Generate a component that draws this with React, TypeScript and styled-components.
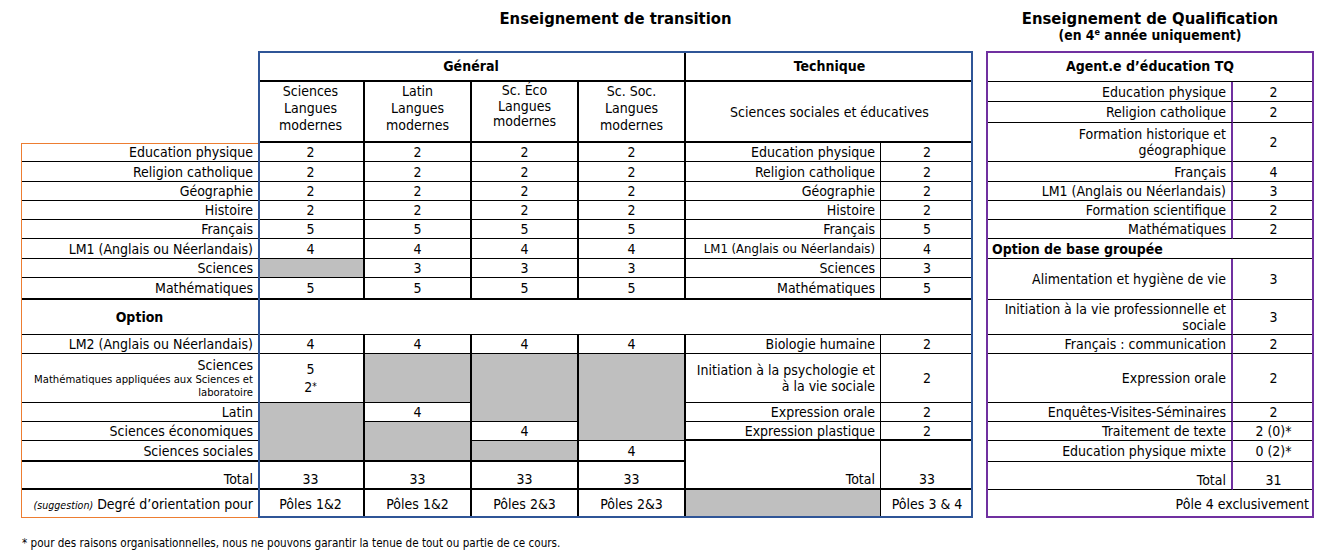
import React from 'react';
import styled, { createGlobalStyle } from 'styled-components';

const BLUE = '#2F5597';
const PURPLE = '#7030A0';
const ORANGE = '#ED7D31';
const GRAY = '#BFBFBF';

const GlobalStyle = createGlobalStyle`
  html, body { margin: 0; padding: 0; background: #fff; }
  body {
    font-family: "DejaVu Sans Condensed", "DejaVu Sans", sans-serif;
    font-stretch: condensed;
    color: #000;
  }
`;

const Page = styled.div`
  padding-left: 21px;
`;

const Sheet = styled.div`
  display: grid;
  grid-template-columns: 237px 107px 107px 107px 107px 195px 92px 13px 247px 81px;
  grid-template-rows: 51px 31px 20px 21px 20px 19px 20px 19px 19px 19px 20px 19px 22px 35px 19px 49px 19px 19px 21px 28px 28px;
  font-size: 14px;
  line-height: 16px;
`;

interface CellProps {
  $area: string;
  $r?: number;
  $rc?: string;
  $b?: number;
  $end?: boolean;
  $size?: number;
}

const Cell = styled.div<CellProps>`
  grid-area: ${p => p.$area};
  box-sizing: border-box;
  min-width: 0;
  display: flex;
  flex-direction: column;
  justify-content: ${p => (p.$end ? 'flex-end' : 'center')};
  padding-bottom: ${p => (p.$end ? '1px' : '0')};
  border-right: ${p => (p.$r ? `${p.$r}px solid ${p.$rc ?? '#000'}` : '0')};
  border-bottom: ${p => (p.$b ? `${p.$b}px solid #000` : '0')};
  font-size: ${p => p.$size ?? 14}px;
  white-space: pre;
`;

const Label = styled(Cell)`
  align-items: flex-end;
  text-align: right;
  padding-left: 4px;
  padding-right: 5px;
`;

const Num = styled(Cell)`
  align-items: center;
  text-align: center;
`;

const Head = styled(Cell)<{ $left?: boolean }>`
  align-items: ${p => (p.$left ? 'flex-start' : 'center')};
  padding-left: ${p => (p.$left ? '6px' : '0')};
  font-weight: 700;
`;

const SubHead = styled(Cell)<{ $lh?: number; $lift?: number }>`
  align-items: center;
  text-align: center;
  line-height: ${p => p.$lh ?? 17}px;
  padding-bottom: ${p => p.$lift ?? 6}px;
`;

const Shade = styled(Cell)`
  background: ${GRAY};
`;

const Frame = styled.div<{ $area: string; $color: string; $w: number; $open?: boolean }>`
  grid-area: ${p => p.$area};
  border: ${p => p.$w}px solid ${p => p.$color};
  border-right-width: ${p => (p.$open ? 0 : p.$w)}px;
  pointer-events: none;
  z-index: 1;
`;

const Title = styled.div<{ $area: string }>`
  grid-area: ${p => p.$area};
  display: flex;
  flex-direction: column;
  align-items: center;
  padding-top: 9px;
  font-weight: 700;
  font-size: 16.5px;
  line-height: 19px;
`;

const SubTitle = styled.span`
  font-size: 13.8px;
  line-height: 14px;
`;

const Sup = styled.sup`
  font-size: 9px;
  line-height: 0;
  vertical-align: 5px;
`;

const Small = styled.span`
  font-size: 11.2px;
  line-height: 13px;
`;

const Note = styled.span`
  font-size: 10.6px;
  font-style: italic;
`;

const Star = styled.span`
  font-size: 10px;
  vertical-align: 2px;
`;

const Stack = styled.span`
  line-height: 18px;
`;

const Footnote = styled.p`
  margin: 18px 0 0 1px;
  font-size: 11.6px;
  line-height: 14px;
`;

const core: [string, (string | null)[], string, number?][] = [
  ['Education physique', ['2', '2', '2', '2'], '2'],
  ['Religion catholique', ['2', '2', '2', '2'], '2'],
  ['Géographie', ['2', '2', '2', '2'], '2'],
  ['Histoire', ['2', '2', '2', '2'], '2'],
  ['Français', ['5', '5', '5', '5'], '5'],
  ['LM1 (Anglais ou Néerlandais)', ['4', '4', '4', '4'], '4', 13],
  ['Sciences', [null, '3', '3', '3'], '3'],
  ['Mathématiques', ['5', '5', '5', '5'], '5'],
];

const qualif: [number, number, string, string][] = [
  [3, 4, 'Education physique', '2'],
  [4, 5, 'Religion catholique', '2'],
  [5, 7, 'Formation historique et\ngéographique', '2'],
  [7, 8, 'Français', '4'],
  [8, 9, 'LM1 (Anglais ou Néerlandais)', '3'],
  [9, 10, 'Formation scientifique', '2'],
  [10, 11, 'Mathématiques', '2'],
  [12, 14, 'Alimentation et hygiène de vie', '3'],
  [14, 15, 'Initiation à la vie professionnelle et\nsociale', '3'],
  [15, 16, 'Français : communication', '2'],
  [16, 17, 'Expression orale', '2'],
  [17, 18, 'Enquêtes-Visites-Séminaires', '2'],
  [18, 19, 'Traitement de texte', '2 (0)*'],
  [19, 20, 'Education physique mixte', '0 (2)*'],
];

// option block: [col, rowStart, rowEnd, content|null]
const optionBlock: [number, number, number, React.ReactNode | null][] = [
  [2, 17, 20, null],
  [3, 16, 17, null],
  [3, 17, 18, '4'],
  [3, 18, 20, null],
  [4, 16, 18, null],
  [4, 18, 19, '4'],
  [4, 19, 20, null],
  [5, 16, 19, null],
  [5, 19, 20, '4'],
];

const techOption: [number, number, string, string, number][] = [
  [15, 16, 'Biologie humaine', '2', 1],
  [16, 17, 'Initiation à la psychologie et\nà la vie sociale', '2', 1],
  [17, 18, 'Expression orale', '2', 1],
  [18, 19, 'Expression plastique', '2', 2],
];

const sub = [
  { text: 'Sciences\nLangues\nmodernes' },
  { text: 'Latin\nLangues\nmodernes' },
  { text: 'Sc. Éco\nLangues\nmodernes', lh: 15.5, lift: 10 },
  { text: 'Sc. Soc.\nLangues\nmodernes' },
];

const poles = ['Pôles 1&2', 'Pôles 1&2', 'Pôles 2&3', 'Pôles 2&3'];

export default function App() {
  return (
    <Page>
      <GlobalStyle />
      <Sheet>
        <Title $area="1 / 2 / 2 / 8">Enseignement de transition</Title>
        <Title $area="1 / 9 / 2 / 11">
          Enseignement de Qualification
          <SubTitle>
            (en 4<Sup>e</Sup> année uniquement)
          </SubTitle>
        </Title>

        {/* headers */}
        <Head $area="2 / 2 / 3 / 6" $r={2} $b={2}>Général</Head>
        <Head $area="2 / 6 / 3 / 8" $b={2}>Technique</Head>
        {sub.map((s, j) => (
          <SubHead key={j} $area={`3 / ${2 + j} / 6 / ${3 + j}`} $r={2} $b={2} $lh={s.lh} $lift={s.lift}>
            {s.text}
          </SubHead>
        ))}
        <Num $area="3 / 6 / 6 / 8" $b={2}>Sciences sociales et éducatives</Num>

        {/* common subjects */}
        {core.map(([label, vals, tech, techSize], i) => {
          const line = 6 + i;
          const b = i === core.length - 1 ? 2 : 1;
          return (
            <React.Fragment key={label}>
              <Label $area={`${line} / 1 / ${line + 1} / 2`} $b={b}>{label}</Label>
              {vals.map((v, j) =>
                v === null ? (
                  <Shade key={j} $area={`${line} / ${2 + j} / ${line + 1} / ${3 + j}`} $r={2} $b={b} />
                ) : (
                  <Num key={j} $area={`${line} / ${2 + j} / ${line + 1} / ${3 + j}`} $r={2} $b={b}>{v}</Num>
                )
              )}
              <Label $area={`${line} / 6 / ${line + 1} / 7`} $r={1} $b={b} $size={techSize}>{label}</Label>
              <Num $area={`${line} / 7 / ${line + 1} / 8`} $b={b}>{tech}</Num>
            </React.Fragment>
          );
        })}

        {/* option section */}
        <Head $area="14 / 1 / 15 / 2" $b={1}>Option</Head>
        <Cell $area="14 / 2 / 15 / 8" $b={1} />

        <Label $area="15 / 1 / 16 / 2" $b={1}>LM2 (Anglais ou Néerlandais)</Label>
        {[0, 1, 2, 3].map(j => (
          <Num key={j} $area={`15 / ${2 + j} / 16 / ${3 + j}`} $r={2} $b={1}>4</Num>
        ))}

        <Label $area="16 / 1 / 17 / 2" $b={1}>
          Sciences
          <Small>{'Mathématiques appliquées aux Sciences et\nlaboratoire'}</Small>
        </Label>
        <Num $area="16 / 2 / 17 / 3" $r={2} $b={1}>
          <Stack>5</Stack>
          <Stack>
            2<Star>*</Star>
          </Stack>
        </Num>
        {optionBlock.map(([col, rs, re, content], k) => {
          const area = `${rs} / ${col} / ${re} / ${col + 1}`;
          const b = re === 20 ? 2 : 1;
          return content === null ? (
            <Shade key={k} $area={area} $r={2} $b={b} />
          ) : (
            <Num key={k} $area={area} $r={2} $b={b}>{content}</Num>
          );
        })}

        <Label $area="17 / 1 / 18 / 2" $b={1}>Latin</Label>
        <Label $area="18 / 1 / 19 / 2" $b={1}>Sciences économiques</Label>
        <Label $area="19 / 1 / 20 / 2" $b={2}>Sciences sociales</Label>

        {techOption.map(([rs, re, label, val, b]) => (
          <React.Fragment key={label}>
            <Label $area={`${rs} / 6 / ${re} / 7`} $r={1} $b={b}>{label}</Label>
            <Num $area={`${rs} / 7 / ${re} / 8`} $b={b}>{val}</Num>
          </React.Fragment>
        ))}

        {/* totals */}
        <Label $area="20 / 1 / 21 / 2" $b={2} $end>Total</Label>
        {[0, 1, 2, 3].map(j => (
          <Num key={j} $area={`20 / ${2 + j} / 21 / ${3 + j}`} $r={2} $b={2} $end>33</Num>
        ))}
        <Label $area="19 / 6 / 21 / 7" $r={1} $b={2} $end>Total</Label>
        <Num $area="19 / 7 / 21 / 8" $b={2} $end>33</Num>

        {/* orientation */}
        <Label $area="21 / 1 / 22 / 2">
          <span>
            <Note>(suggestion)</Note> Degré d’orientation pour
          </span>
        </Label>
        {poles.map((p, j) => (
          <Num key={j} $area={`21 / ${2 + j} / 22 / ${3 + j}`} $r={2}>{p}</Num>
        ))}
        <Shade $area="21 / 6 / 22 / 7" $r={1} />
        <Num $area="21 / 7 / 22 / 8">Pôles 3 &amp; 4</Num>

        {/* qualification */}
        <Head $area="2 / 9 / 3 / 11" $b={1}>Agent.e d’éducation TQ</Head>
        {qualif.map(([rs, re, label, val]) => (
          <React.Fragment key={label}>
            <Label $area={`${rs} / 9 / ${re} / 10`} $r={2} $rc={PURPLE} $b={1}>{label}</Label>
            <Num $area={`${rs} / 10 / ${re} / 11`} $b={1}>{val}</Num>
          </React.Fragment>
        ))}
        <Head $area="11 / 9 / 12 / 11" $b={1} $left>Option de base groupée</Head>
        <Label $area="20 / 9 / 21 / 10" $r={2} $rc={PURPLE} $b={1} $end>Total</Label>
        <Num $area="20 / 10 / 21 / 11" $b={1} $end>31</Num>
        <Label $area="21 / 9 / 22 / 11">Pôle 4 exclusivement</Label>

        {/* frames */}
        <Frame $area="6 / 1 / 22 / 2" $color={ORANGE} $w={1} $open />
        <Frame $area="2 / 2 / 22 / 8" $color={BLUE} $w={2} />
        <Frame $area="2 / 9 / 22 / 11" $color={PURPLE} $w={2} />
      </Sheet>
      <Footnote>
        * pour des raisons organisationnelles, nous ne pouvons garantir la tenue de tout ou partie de ce cours.
      </Footnote>
    </Page>
  );
}
